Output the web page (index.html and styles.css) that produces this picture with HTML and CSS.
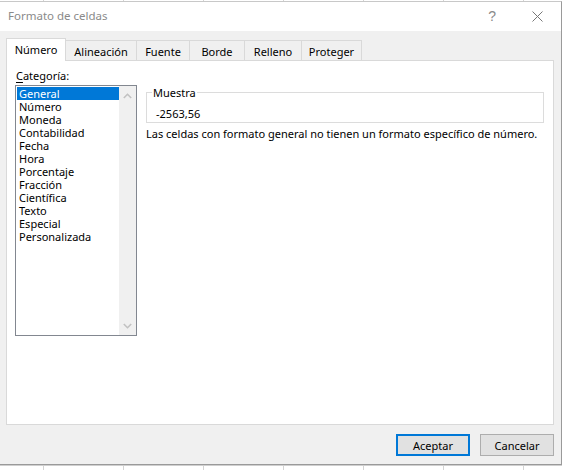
FILE: index.html
```html
<!DOCTYPE html>
<html lang="es">
<head>
<meta charset="utf-8">
<title>Formato de celdas</title>
<link rel="stylesheet" href="styles.css">
</head>
<body>
<div class="dialog">
  <div class="titlebar">
    <span class="title">Formato de celdas</span>
    <span class="help">?</span>
    <svg class="close" width="11" height="11" viewBox="0 0 11 11"><path d="M0.5 0.5 L10.5 10.5 M10.5 0.5 L0.5 10.5" stroke="#777" stroke-width="1" fill="none"/></svg>
  </div>
  <div class="content">
    <div class="tabs">
      <div class="tab active w1">Número</div>
      <div class="tab w2">Alineación</div>
      <div class="tab w3">Fuente</div>
      <div class="tab w4">Borde</div>
      <div class="tab w5">Relleno</div>
      <div class="tab w6">Proteger</div>
    </div>
    <div class="panel">
      <div class="leftcol">
        <div class="label"><u>C</u>ategoría:</div>
        <div class="listbox">
          <ul class="items">
            <li class="sel">General</li>
            <li>Número</li>
            <li>Moneda</li>
            <li>Contabilidad</li>
            <li>Fecha</li>
            <li>Hora</li>
            <li>Porcentaje</li>
            <li>Fracción</li>
            <li>Científica</li>
            <li>Texto</li>
            <li>Especial</li>
            <li>Personalizada</li>
          </ul>
          <div class="scrollbar">
            <svg width="9" height="6" viewBox="0 0 9 6"><polyline points="0.8,5 4.5,1.3 8.2,5" fill="none" stroke="#c2c2c2" stroke-width="1.6"/></svg>
            <svg width="9" height="6" viewBox="0 0 9 6"><polyline points="0.8,1 4.5,4.7 8.2,1" fill="none" stroke="#c2c2c2" stroke-width="1.6"/></svg>
          </div>
        </div>
      </div>
      <div class="rightcol">
        <fieldset class="sample">
          <legend>Muestra</legend>
          <div class="value">-2563,56</div>
        </fieldset>
        <p class="desc">Las celdas con formato general no tienen un formato específico de número.</p>
      </div>
    </div>
    <div class="buttons">
      <button class="btn default">Aceptar</button>
      <button class="btn">Cancelar</button>
    </div>
  </div>
</div>
</body>
</html>
```

FILE: styles.css
```css
html, body {
  margin: 0;
  padding: 0;
}
body {
  width: 562px;
  height: 470px;
  overflow: hidden;
  background-color: #ffffff;
  background-image: repeating-linear-gradient(to right, transparent 0 43px, #d4d4d4 43px 44px, transparent 44px 80px);
  font-family: "Noto Sans", "DejaVu Sans", sans-serif;
  font-size: 11px;
  color: #000;
}
.dialog {
  margin-top: 1px;
  width: 561px;
  height: 462px;
  border-top: 1px solid #c8c8c8;
  border-right: 1px solid #9a9a9a;
  border-bottom: 1px solid #9a9a9a;
  box-shadow: 0 1px 0 #cfcfcf;
  background: #f0f0f0;
  display: flex;
  flex-direction: column;
}
.titlebar {
  height: 29px;
  background: #fff;
  display: flex;
  align-items: center;
  padding-left: 8px;
  padding-right: 18px;
}
.title {
  color: #8a8a8a;
  font-size: 11.5px;
  flex: 1;
  margin-top: -2px;
}
.help {
  color: #8a8a8a;
  font-size: 14px;
  margin-right: 36px;
  margin-top: -1px;
  font-family: "Liberation Sans", sans-serif;
}
.close {
  display: block;
  margin-top: -1px;
}
.content {
  flex: 1;
  padding: 7px 7px 0 6px;
  display: flex;
  flex-direction: column;
}
.tabs {
  display: flex;
  align-items: flex-end;
  height: 22px;
  position: relative;
  z-index: 1;
}
.tab {
  height: 20px;
  box-sizing: border-box;
  border: 1px solid #d9d9d9;
  border-bottom: none;
  border-left: none;
  background: #f0f0f0;
  display: flex;
  align-items: center;
  justify-content: center;
  line-height: 13px;
  padding-top: 1px;
}
.tab.active {
  height: 23px;
  margin-bottom: -1px;
  background: #fff;
  border-left: 1px solid #d9d9d9;
  padding-top: 0;
  padding-bottom: 1px;
}
.w1 { width: 60px; }
.w2 { width: 71px; }
.w3 { width: 53px; }
.w4 { width: 55px; }
.w5 { width: 57px; }
.w6 { width: 60px; }
.panel {
  box-sizing: border-box;
  height: 365px;
  flex: none;
  background: #fff;
  border: 1px solid #d9d9d9;
  display: flex;
  padding: 8px 9px 0 8px;
}
.leftcol {
  width: 122px;
}
.label {
  line-height: 13px;
  height: 13px;
  margin-bottom: 3px;
  padding-left: 1px;
}
.label u {
  text-underline-offset: 2px;
}
.listbox {
  box-sizing: border-box;
  width: 122px;
  height: 251px;
  border: 1px solid #828790;
  padding: 1px 0 1px 1px;
  display: flex;
}
.items {
  list-style: none;
  margin: 0;
  padding: 0;
  width: 102px;
}
.items li {
  height: 13px;
  line-height: 13px;
  padding-left: 2px;
  color: #000;
  white-space: nowrap;
}
.items li.sel {
  background: #0078d7;
  color: #fff;
}
.scrollbar {
  width: 17px;
  margin-top: -1px;
  margin-bottom: -1px;
  background: #f0f0f0;
  display: flex;
  flex-direction: column;
  justify-content: space-between;
  align-items: center;
  padding: 7px 0 6px;
}
.scrollbar svg {
  display: block;
}
.rightcol {
  flex: 1;
  margin-left: 9px;
}
.sample {
  margin: 17px 0 0 0;
  padding: 0 0 2px 0;
  border: 1px solid #dcdcdc;
}
.sample legend {
  padding: 0 1px;
  margin-left: 5px;
  line-height: 13px;
}
.value {
  line-height: 13px;
  padding: 8px 0 0 9px;
}
.desc {
  margin: 4px 0 0 0;
  line-height: 13px;
  white-space: nowrap;
}
.buttons {
  display: flex;
  justify-content: flex-end;
  gap: 10px;
  margin-top: 9px;
}
.btn {
  width: 74px;
  height: 22px;
  box-sizing: border-box;
  background: #e1e1e1;
  border: 1px solid #adadad;
  font-family: "Noto Sans", "DejaVu Sans", sans-serif;
  font-size: 11px;
  color: #000;
  padding: 0;
  line-height: 13px;
}
.btn.default {
  border: 2px solid #0078d7;
}
```
